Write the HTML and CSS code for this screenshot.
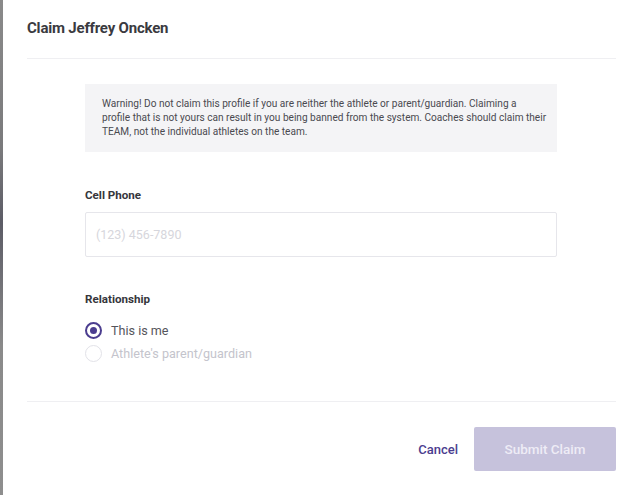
FILE: index.html
```html
<!DOCTYPE html>
<html>
<head>
<meta charset="utf-8">
<link rel="stylesheet" href="styles.css">
</head>
<body>
<div class="screen">
  <div class="edge"></div>
  <div class="modal">
    <div class="modal-header">
      <h1 class="title">Claim Jeffrey Oncken</h1>
    </div>
    <div class="modal-body">
      <div class="warning">Warning! Do not claim this profile if you are neither the athlete or parent/guardian. Claiming a<br>profile that is not yours can result in you being banned from the system. Coaches should claim their<br>TEAM, not the individual athletes on the team.</div>
      <label class="field-label">Cell Phone</label>
      <div class="input"><span class="placeholder">(123) 456-7890</span></div>
      <div class="field-label rel-label">Relationship</div>
      <div class="radios">
        <div class="radio-row">
          <span class="radio checked"><span class="dot"></span></span>
          <span class="radio-text">This is me</span>
        </div>
        <div class="radio-row disabled">
          <span class="radio"></span>
          <span class="radio-text">Athlete's parent/guardian</span>
        </div>
      </div>
    </div>
    <div class="modal-footer">
      <span class="cancel">Cancel</span>
      <span class="submit">Submit Claim</span>
    </div>
  </div>
</div>
</body>
</html>
```

FILE: styles.css
```css
* { box-sizing: border-box; }
html, body { margin: 0; padding: 0; background: #fff; }
body { font-family: Roboto, "Liberation Sans", sans-serif; }
.screen { display: flex; width: 640px; height: 495px; }
.edge {
  width: 3px;
  flex: none;
  background: linear-gradient(to bottom, #8a8a8a 0%, #7a7a7c 30%, #5c5c66 45%, #6e6e74 55%, #8a8a8a 70%, #8e8e8e 100%);
}
.modal { flex: 1; padding: 0 24px 0 24px; display: flex; flex-direction: column; }
.modal-header { padding: 18px 0 20px; border-bottom: 1px solid #efeff2; }
.title {
  margin: 0;
  font-size: 15px;
  line-height: 20px;
  font-weight: 700;
  color: #3a3a40;
  letter-spacing: -0.2px;
}
.modal-body { padding: 25px 59px 40px 58px; border-bottom: 1px solid #efeff2; }
.warning {
  background: #f4f4f6;
  padding: 13px 2px 13px 17px;
  font-size: 10.1px;
  line-height: 14px;
  color: #4a4a50;
  height: 68px;
  white-space: nowrap;
}
.field-label {
  display: block;
  margin-top: 36px;
  font-size: 11.6px;
  line-height: 14px;
  font-weight: 700;
  color: #36363c;
}
.input {
  margin-top: 10px;
  height: 45px;
  border: 1px solid #e6e6eb;
  border-radius: 2px;
  display: flex;
  align-items: center;
  padding-left: 10px;
}
.placeholder { font-size: 12.5px; color: #d6d6dc; }
.rel-label { margin-top: 35px; }
.radios { margin-top: 16px; display: flex; flex-direction: column; gap: 7px; }
.radio-row { display: flex; align-items: center; height: 16px; gap: 9px; }
.radio {
  width: 17px; height: 17px; border-radius: 50%;
  border: 1px solid #e2e2e8;
  display: flex; align-items: center; justify-content: center;
  flex: none;
}
.radio.checked { border: 2.5px solid #4b3d8f; }
.dot { width: 7px; height: 7px; border-radius: 50%; background: #4b3d8f; }
.radio-text { font-size: 12.6px; color: #55555c; }
.disabled .radio-text { color: #c4c4cc; }
.modal-footer {
  padding-top: 25px;
  display: flex;
  justify-content: flex-end;
  align-items: center;
  gap: 16px;
}
.cancel { font-size: 13px; font-weight: 500; color: #4b3d8f; }
.submit {
  width: 142px; height: 44px;
  background: #c6c2dc;
  color: #eeecf6;
  border-radius: 2px;
  display: flex; align-items: center; justify-content: center;
  font-size: 13.5px; font-weight: 500;
}
```
